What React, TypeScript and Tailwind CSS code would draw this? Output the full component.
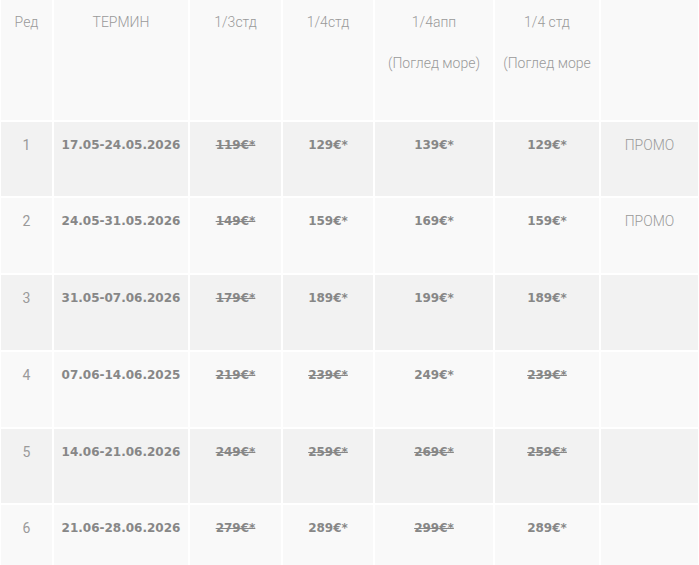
import React from "react";

type Cell = { t: string; s?: boolean };
const rows: { n: string; d: string; p: Cell[]; promo: string; h: string }[] = [
  { n: "1", d: "17.05-24.05.2026", p: [{ t: "119€*", s: true }, { t: "129€*" }, { t: "139€*" }, { t: "129€*" }], promo: "ПРОМО", h: "h-[74px]" },
  { n: "2", d: "24.05-31.05.2026", p: [{ t: "149€*", s: true }, { t: "159€*" }, { t: "169€*" }, { t: "159€*" }], promo: "ПРОМО", h: "h-[75px]" },
  { n: "3", d: "31.05-07.06.2026", p: [{ t: "179€*", s: true }, { t: "189€*" }, { t: "199€*" }, { t: "189€*" }], promo: "", h: "h-[75px]" },
  { n: "4", d: "07.06-14.06.2025", p: [{ t: "219€*", s: true }, { t: "239€*", s: true }, { t: "249€*" }, { t: "239€*", s: true }], promo: "", h: "h-[75px]" },
  { n: "5", d: "14.06-21.06.2026", p: [{ t: "249€*", s: true }, { t: "259€*", s: true }, { t: "269€*", s: true }, { t: "259€*", s: true }], promo: "", h: "h-[74px]" },
  { n: "6", d: "21.06-28.06.2026", p: [{ t: "279€*", s: true }, { t: "289€*" }, { t: "299€*", s: true }, { t: "289€*" }], promo: "", h: "h-[75px]" },
];

const light = "font-['Roboto',sans-serif] text-[14px] leading-5 text-[#9a9a9a] font-light";
const bold = "font-['DejaVu_Sans',sans-serif] text-[12px] leading-5 font-bold text-[#878787]";

export default function App() {
  return (
    <div className="w-[699px] h-[565px] overflow-hidden bg-white">
      <div className="grid grid-cols-[51px_134px_91px_90px_118px_104px_97px] gap-[2px] pl-[1px]">
        {["Ред", "ТЕРМИН", "1/3стд", "1/4стд"].map((h) => (
          <div key={h} className={`bg-[#f9f9f9] h-[120px] pt-[12px] text-center ${light}`}>{h}</div>
        ))}
        <div className={`bg-[#f9f9f9] h-[120px] pt-[12px] text-center flex flex-col gap-[21px] ${light}`}>
          <span>1/4апп</span>
          <span>(Поглед море)</span>
        </div>
        <div className={`bg-[#f9f9f9] h-[120px] pt-[12px] text-center flex flex-col gap-[21px] ${light}`}>
          <span>1/4 стд</span>
          <span>(Поглед море</span>
        </div>
        <div className="bg-[#f9f9f9] h-[120px]" />
        {rows.map((r, i) => {
          const bg = i % 2 === 0 ? "bg-[#f2f2f2]" : "bg-[#f9f9f9]";
          return (
            <React.Fragment key={r.n}>
              <div className={`${bg} ${r.h} pt-[13px] text-center ${light} font-normal`}>{r.n}</div>
              <div className={`${bg} ${r.h} pt-[13px] text-center ${bold}`}>{r.d}</div>
              {r.p.map((c, j) => (
                <div key={j} className={`${bg} ${r.h} pt-[13px] text-center ${bold}`}>
                  <span className={c.s ? "line-through" : ""}>{c.t}</span>
                </div>
              ))}
              <div className={`${bg} ${r.h} pt-[13px] text-center ${light}`}>{r.promo}</div>
            </React.Fragment>
          );
        })}
      </div>
    </div>
  );
}
